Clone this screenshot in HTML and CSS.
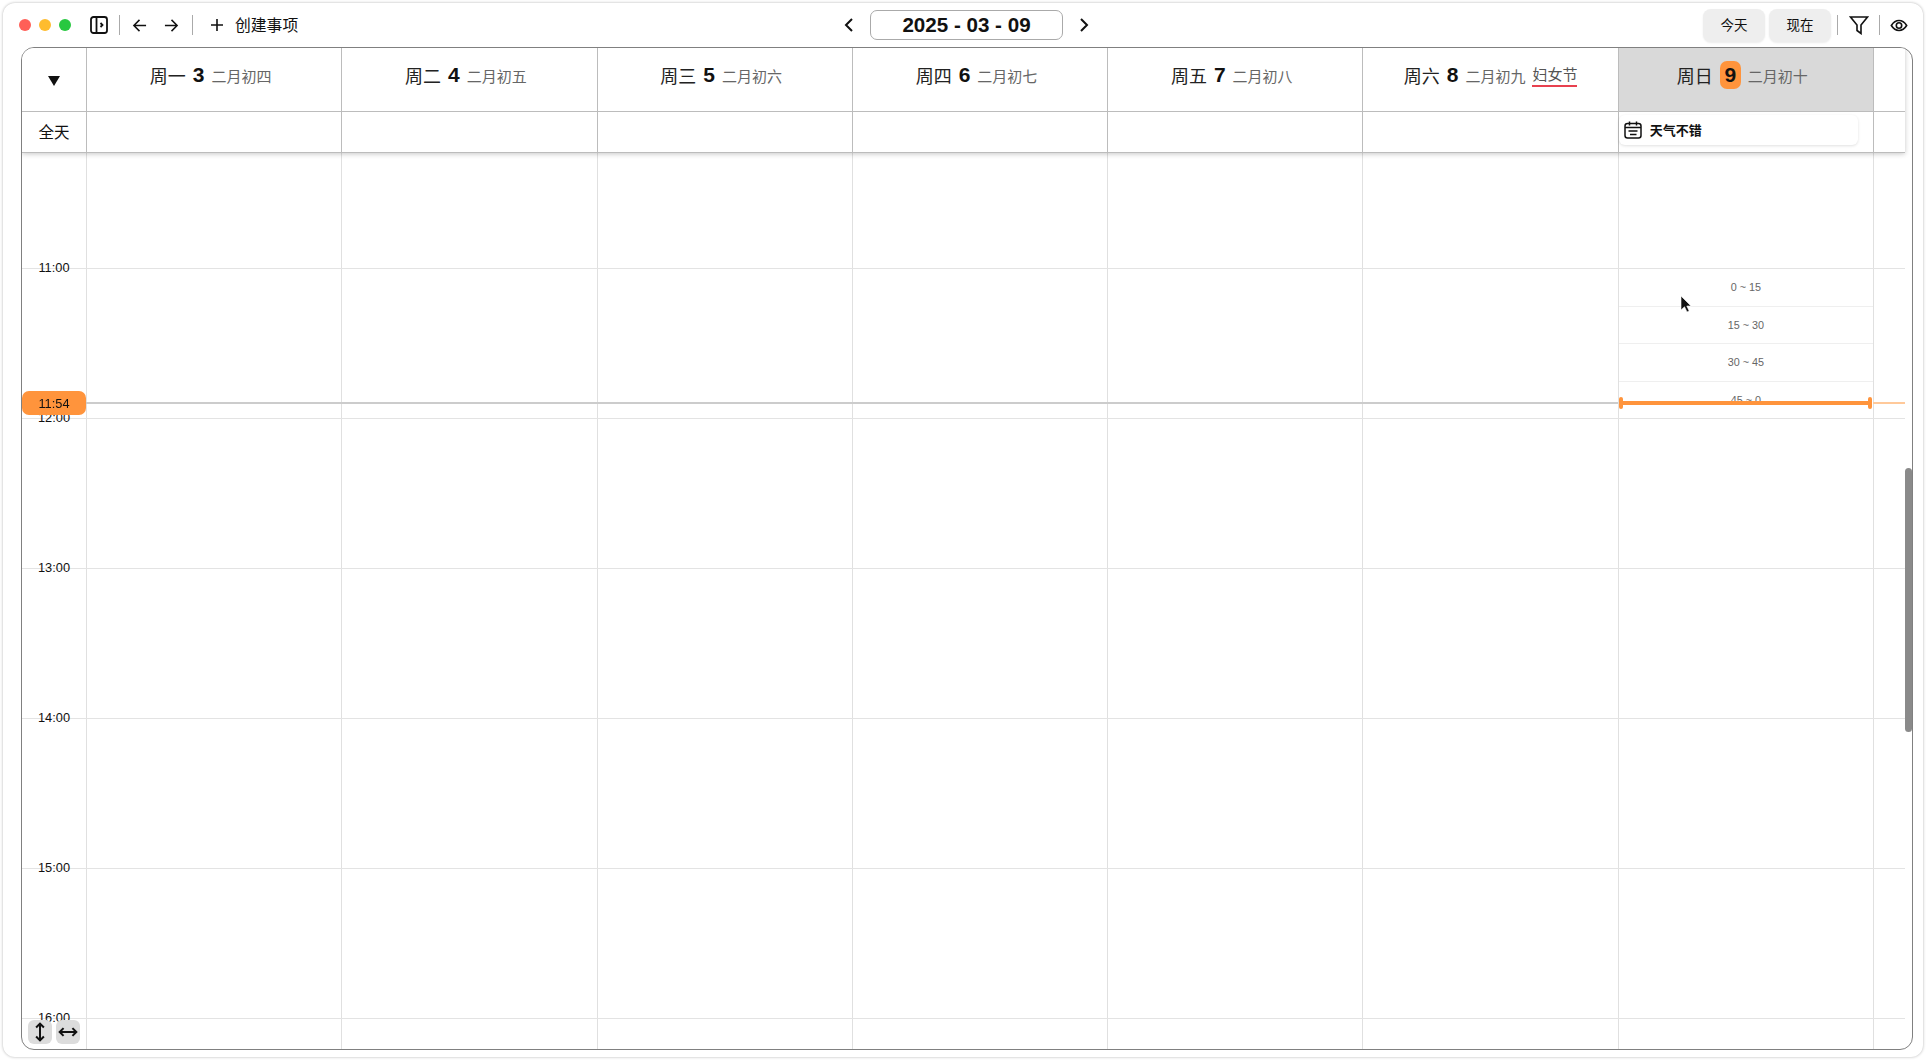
FILE: index.html
```html
<!DOCTYPE html>
<html lang="zh">
<head>
<meta charset="utf-8">
<title>日历</title>
<link rel="stylesheet" href="styles.css">
</head>
<body>
<div class="window">
  <header class="toolbar">
    <div class="tb-left">
      <span class="light red"></span><span class="light yellow"></span><span class="light green"></span>
      <svg class="ic side" viewBox="0 0 18 18"><rect x="1" y="1" width="16" height="16" rx="2.500"/><path d="M6.500 1v16M10.500 7l2 2-2 2"/></svg>
      <span class="sep"></span>
      <svg class="ic arrow" viewBox="0 0 16 16"><path d="M15 8H2M8 2L2 8l6 6"/></svg>
      <svg class="ic arrow" viewBox="0 0 16 16"><path d="M1 8h13M8 2l6 6-6 6"/></svg>
      <span class="sep"></span>
      <svg class="ic plus" viewBox="0 0 14 14"><path d="M7 1v12M1 7h12"/></svg>
      <span class="create">创建事项</span>
    </div>
    <div class="tb-center">
      <svg class="ic chev" viewBox="0 0 10 16"><path d="M8 2L2 8l6 6"/></svg>
      <div class="date-box">2025 - 03 - 09</div>
      <svg class="ic chev" viewBox="0 0 10 16"><path d="M2 2l6 6-6 6"/></svg>
    </div>
    <div class="tb-right">
      <button class="btn">今天</button>
      <button class="btn">现在</button>
      <span class="sep"></span>
      <svg class="ic filter" viewBox="0 0 20 20"><path d="M1.500 2h17l-6.500 8v8.500l-4-3V10z"/></svg>
      <span class="sep"></span>
      <svg class="ic eye" viewBox="0 0 20 14"><path d="M1.500 7C4 3 6.800 1.500 10 1.500S16 3 18.500 7c-2.500 4-5.300 5.500-8.500 5.500S4 11 1.500 7z"/><circle cx="10" cy="7" r="3"/></svg>
    </div>
  </header>

  <main class="calendar">
    <div class="top">
      <div class="row-grid head-row">
        <div class="cell corner"><span class="tri"></span></div>
        <div class="cell day"><span class="wk">周一</span><b class="num">3</b><span class="lunar">二月初四</span></div>
        <div class="cell day"><span class="wk">周二</span><b class="num">4</b><span class="lunar">二月初五</span></div>
        <div class="cell day"><span class="wk">周三</span><b class="num">5</b><span class="lunar">二月初六</span></div>
        <div class="cell day"><span class="wk">周四</span><b class="num">6</b><span class="lunar">二月初七</span></div>
        <div class="cell day"><span class="wk">周五</span><b class="num">7</b><span class="lunar">二月初八</span></div>
        <div class="cell day has-holiday"><span class="wk">周六</span><b class="num">8</b><span class="lunar">二月初九</span><span class="holiday">妇女节</span></div>
        <div class="cell day today"><span class="wk">周日</span><b class="num badge">9</b><span class="lunar">二月初十</span></div>
        <div class="cell"></div>
      </div>
      <div class="row-grid allday-row">
        <div class="cell allday-label">全天</div>
        <div class="cell"></div><div class="cell"></div><div class="cell"></div><div class="cell"></div><div class="cell"></div><div class="cell"></div>
        <div class="cell event-cell">
          <div class="event">
            <svg class="ic cal-ic" viewBox="0 0 18 18"><rect x="1" y="2.500" width="16" height="14.500" rx="2.500"/><path d="M5.500 .5v4M12.500 .5v4M1 6.500h16M4.500 10h9M6 13.500h6.500"/></svg>
            <span>天气不错</span>
          </div>
        </div>
        <div class="cell"></div>
      </div>
    </div>

    <div class="hours">
      <div class="row-grid hour first">
        <div class="cell"></div><div class="cell"></div><div class="cell"></div><div class="cell"></div><div class="cell"></div><div class="cell"></div><div class="cell"></div><div class="cell"></div><div class="cell"></div>
      </div>
      <div class="row-grid hour">
        <div class="cell gutter"><span class="time">11:00</span></div>
        <div class="cell"></div><div class="cell"></div><div class="cell"></div><div class="cell"></div><div class="cell"></div><div class="cell"></div>
        <div class="cell slots">
          <div class="slot">0 ~ 15</div>
          <div class="slot">15 ~ 30</div>
          <div class="slot">30 ~ 45</div>
          <div class="slot">45 ~ 0</div>
        </div>
        <div class="cell"></div>
      </div>
      <div class="row-grid hour">
        <div class="cell gutter"><span class="time">12:00</span></div>
        <div class="cell"></div><div class="cell"></div><div class="cell"></div><div class="cell"></div><div class="cell"></div><div class="cell"></div><div class="cell"></div><div class="cell"></div>
      </div>
      <div class="row-grid hour">
        <div class="cell gutter"><span class="time">13:00</span></div>
        <div class="cell"></div><div class="cell"></div><div class="cell"></div><div class="cell"></div><div class="cell"></div><div class="cell"></div><div class="cell"></div><div class="cell"></div>
      </div>
      <div class="row-grid hour">
        <div class="cell gutter"><span class="time">14:00</span></div>
        <div class="cell"></div><div class="cell"></div><div class="cell"></div><div class="cell"></div><div class="cell"></div><div class="cell"></div><div class="cell"></div><div class="cell"></div>
      </div>
      <div class="row-grid hour">
        <div class="cell gutter"><span class="time">15:00</span></div>
        <div class="cell"></div><div class="cell"></div><div class="cell"></div><div class="cell"></div><div class="cell"></div><div class="cell"></div><div class="cell"></div><div class="cell"></div>
      </div>
      <div class="row-grid hour">
        <div class="cell gutter"><span class="time">16:00</span></div>
        <div class="cell"></div><div class="cell"></div><div class="cell"></div><div class="cell"></div><div class="cell"></div><div class="cell"></div><div class="cell"></div><div class="cell"></div>
      </div>
    </div>

    <div class="row-grid now">
      <div class="now-pill">11:54</div>
      <div class="now-line"></div>
      <div class="now-today"></div>
      <div class="now-rest"></div>
    </div>

    <div class="thumb"></div>

    <div class="toggles">
      <span class="toggle"><svg class="ic tg" viewBox="0 0 14 18"><path d="M7 2v14M3.500 5L7 1.500 10.500 5M3.500 13L7 16.500 10.500 13"/></svg></span>
      <span class="toggle"><svg class="ic tg" viewBox="0 0 18 14"><path d="M2 7h14M5 3.500L1.500 7 5 10.500M13 3.500L16.500 7 13 10.500"/></svg></span>
    </div>

    <svg class="cursor" viewBox="0 0 12 18"><path d="M1 1v14l3.500-3.200L7 17l2.200-1-2.400-5H11z"/></svg>
  </main>
</div>
</body>
</html>
```
FILE: styles.css
```css
* { box-sizing: border-box; }
html, body { height: 100%; }
body {
  margin: 0;
  background: #fff;
  color: #111;
  font-family: "Liberation Sans", "Noto Sans CJK SC", sans-serif;
  padding: 3px 3px 4px 3px;
  overflow: hidden;
}
.window {
  height: 100%;
  display: flex;
  flex-direction: column;
  background: #fff;
  border-radius: 12px;
  box-shadow: 0 0 3px rgba(0,0,0,.3);
  padding: 0 10px 7px 18px;
}
.ic { fill: none; stroke: #111; stroke-width: 1.6; flex: none; }

/* toolbar */
.toolbar { height: 44px; flex: none; display: flex; align-items: center; margin-left: -18px; margin-right: -10px; }
.tb-left { display: flex; align-items: center; width: 841px; padding-left: 16px; flex: none; }
.light { width: 12px; height: 12px; border-radius: 50%; margin-right: 8px; }
.red { background: #ff5f57; }
.yellow { background: #febc2e; }
.green { background: #28c840; }
.side { width: 18px; height: 18px; margin-left: 11px; stroke-width: 1.800; }
.sep { width: 1px; height: 20px; background: #aaa; flex: none; }
.tb-left .sep { margin-left: 11px; margin-right: 12px; }
.arrow { width: 15px; height: 15px; margin-right: 17px; }
.arrow + .sep { margin-left: -4px; }
.plus { width: 14px; height: 14px; margin-left: 5px; }
.create { font-size: 15.800px; margin-left: 11px; padding-bottom: 2px; }
.tb-center { display: flex; align-items: center; }
.chev { width: 10px; height: 16px; stroke-width: 2; }
.date-box {
  width: 193px; height: 30px; margin: 0 16px;
  border: 1px solid #aaa; border-radius: 7px;
  display: flex; align-items: center; justify-content: center;
  font-weight: 700; font-size: 20.600px;
}
.tb-right { margin-left: auto; display: flex; align-items: center; padding-right: 15px; }
.btn {
  width: 62px; height: 33px; margin-right: 4px; padding: 0 0 2px;
  border: 0; border-radius: 8px; background: #eee;
  box-shadow: 0 1px 2px rgba(0,0,0,.08);
  font: inherit; font-size: 13.500px; color: #111;
}
.tb-right .sep { margin-left: 2px; }
.filter { width: 20px; height: 20px; margin: 0 8px 0 11px; }
.eye { width: 18px; height: 13px; margin-left: 10px; stroke-width: 1.800; }

/* calendar */
.calendar {
  position: relative;
  flex: 1;
  min-height: 0;
  border: 1px solid #808080;
  border-radius: 13px;
  overflow: hidden;
  background: #fff;
  padding-right: 7px;
  display: flex;
  flex-direction: column;
}
.row-grid { display: grid; grid-template-columns: 64px repeat(7, 1fr) 32px; }
.cell { border-left: 1px solid #bcbcbc; min-width: 0; }
.cell:first-child { border-left: 0; }
.top { flex: none; position: relative; z-index: 2; background: #fff; box-shadow: 0 1px 5px rgba(0,0,0,.22); }
.head-row { height: 64px; border-bottom: 1px solid #bcbcbc; }
.allday-row { height: 41px; border-bottom: 1px solid #bcbcbc; }
.corner { display: flex; align-items: center; justify-content: center; padding-top: 2px; }
.tri { width: 0; height: 0; border-left: 6.500px solid transparent; border-right: 6.500px solid transparent; border-top: 10px solid #111; }
.day {
  display: flex; align-items: center; justify-content: center; gap: 7px;
  padding: 0 7px 9px 0;
}
.day.has-holiday { padding-right: 0; }
.today { background: #d9d9d9; }
.wk { font-size: 18px; color: #222; }
.num { font-size: 21px; font-weight: 700; }
.lunar { font-size: 15px; color: #666; }
.badge { width: 21px; height: 28px; background: #ff943c; border-radius: 7px; display: flex; align-items: center; justify-content: center; }
.holiday { font-size: 15px; color: #555; border-bottom: 2px solid #e8414f; line-height: 20px; margin-top: 2px; }
.allday-label { font-size: 15.500px; display: flex; align-items: center; justify-content: center; padding-bottom: 2px; }
.event-cell { padding: 3px 15px 2px 0; }
.event {
  height: 30px; border-radius: 6px; background: #fff;
  box-shadow: 0 1px 3px rgba(0,0,0,.12);
  display: flex; align-items: center; gap: 8px; padding: 0 0 0 5px;
  font-size: 13px; font-weight: 600;
}
.event span { padding-bottom: 2px; }
.cal-ic { width: 18px; height: 18px; stroke-width: 1.500; }

.hours { flex: 1; min-height: 0; overflow: hidden; }
.hour { height: 150px; border-top: 1px solid #e3e3e3; }
.hour.first { height: 115px; border-top: 0; }
.hour .cell { border-left-color: #e0e0e0; }
.gutter { position: relative; }
.time { position: absolute; left: 0; right: 0; top: 0; text-align: center; font-size: 12.800px; line-height: 16px; transform: translateY(-9px); }
.slots { display: flex; flex-direction: column; }
.slot { flex: 1; display: flex; align-items: center; justify-content: center; font-size: 10.800px; color: #666; border-top: 1px solid #efefef; }
.slot:first-child { border-top: 0; }

/* now marker */
.now { position: absolute; left: 0; right: 7px; top: 343px; height: 24px; z-index: 3; align-items: center; }
.now-pill { height: 24px; background: #ff943c; border-radius: 7px; font-size: 12.800px; display: flex; align-items: center; justify-content: center; }
.now-line { grid-column: 2 / span 6; height: 2px; background: #ccc; }
.now-today { position: relative; height: 4px; margin: 0 1px 0 1px; background: #ff943c; mix-blend-mode: multiply; }
.now-today::before, .now-today::after { content: ""; position: absolute; top: -4px; width: 4px; height: 12px; border-radius: 2px; background: #ff943c; }
.now-today::before { left: 0; }
.now-today::after { right: 0; }
.now-rest { height: 2px; background: #ffc99a; }

.thumb { position: absolute; right: 0; top: 420px; width: 7px; height: 264px; border-radius: 4px; background: #8a8a8a; }

.toggles { position: absolute; left: 6px; bottom: 5px; z-index: 4; display: flex; gap: 4px; }
.toggle { width: 24px; height: 24px; border-radius: 6px; background: #dcdcdc; display: flex; align-items: center; justify-content: center; }
.tg { width: 20px; height: 20px; stroke-width: 1.800; }

.cursor { position: absolute; left: 1658px; top: 247px; width: 12px; height: 18px; fill: #111; stroke: #fff; stroke-width: .6; z-index: 5; }
```
